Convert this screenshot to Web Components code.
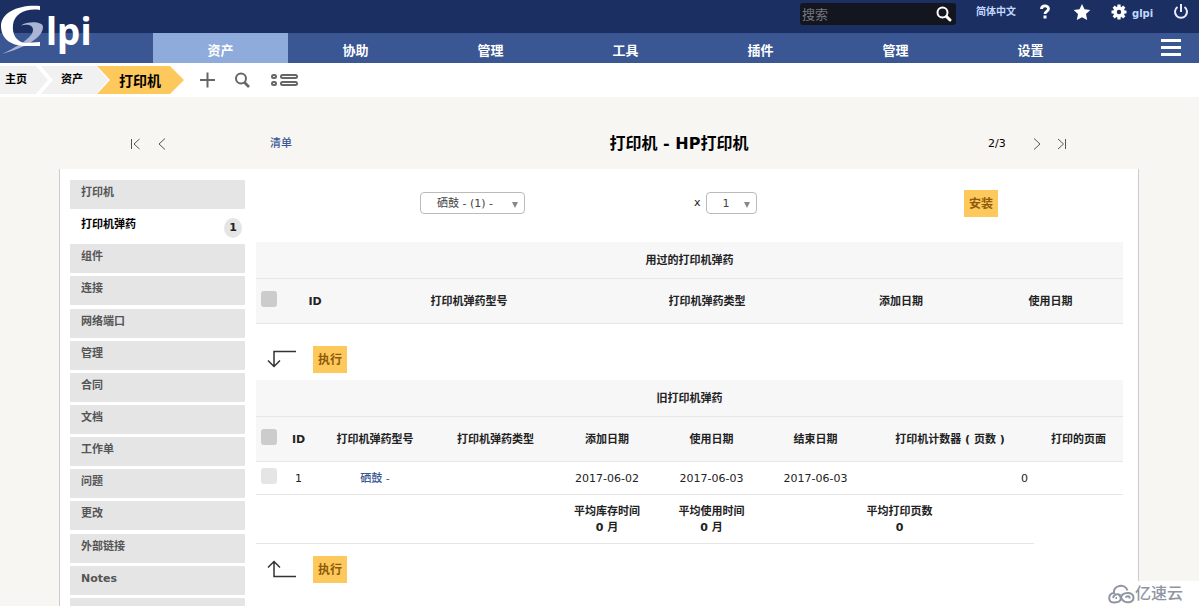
<!DOCTYPE html>
<html lang="zh-CN">
<head>
<meta charset="utf-8">
<title>GLPI - 打印机</title>
<style>
html,body{margin:0;height:100%}
body{font:11px/16px "DejaVu Sans","Noto Sans CJK SC",sans-serif;color:#222;background:#f7f6f3}
</style>
</head>
<body>
<glpi-app></glpi-app>
<script>
const define = (name, html, setup) => customElements.define(name, class extends HTMLElement {
  constructor() {
    super();
    const t = document.createElement('template');
    t.innerHTML = html;
    this.attachShadow({ mode: 'open' }).append(t.content.cloneNode(true));
  }
  connectedCallback() {
    if (setup) setup(this);
  }
});

define('glpi-logo', `
<style>:host{display:block;width:96px;height:60px} a,svg{display:block}
text{font:700 37px "Noto Sans",sans-serif;fill:#fff}</style>
<a href="#" aria-label="GLPI"><svg width="96" height="60" viewBox="0 0 96 60">
<path fill="#a9b5d3" d="M21 25.500C27 21 43 21 43 27C43 38 24 48 2 54C19 46 33 37 33 30C33 25 28 24 21 25.500Z"/>
<path fill="#fff" d="M40 6V10C26 8 14 14 13 25C12 34 16 41 24 43L40 42V46L26 46C9 46 1 37 1 26C1 12 20 4 40 6Z"/>
<text x="46" y="45">lpi</text></svg></a>`);

define('glpi-topbar', `
<style>
:host{display:flex;justify-content:flex-end;align-items:flex-start;height:33px;background:#1b2f62;padding-right:10px;box-sizing:border-box;color:#c3d8ff}
form{display:flex;align-items:center;width:156px;height:22px;margin:3px 20px 0 0;background:#13151f;border-radius:3px}
input{flex:1;min-width:0;background:none;border:0;outline:0;padding:2px 2px 0;color:#ccc;font:13px/20px "DejaVu Sans","Noto Sans CJK SC",sans-serif}
input::placeholder{color:#74777f}
button{background:none;border:0;padding:0;margin-right:4px;display:flex}
a{color:inherit;text-decoration:none;display:flex;align-items:center;height:24px;font-weight:700;font-size:10px}
svg{display:block}
.lang{width:60px}.help{width:37px}.star{width:38px}.user{width:62px;gap:5px}
.user span{padding-top:3px}
</style>
<form><input aria-label="搜索" placeholder="搜索"><button type="button" aria-label="搜索"><svg width="16" height="16" viewBox="0 0 16 16" fill="none" stroke="#fff" stroke-width="2"><circle cx="6.500" cy="6.500" r="5"/><path stroke-width="3" stroke-linecap="round" d="M10.500 10.500L14 14"/></svg></button></form>
<a class="lang" href="#">简体中文</a>
<a class="help" href="#" aria-label="帮助"><svg width="18" height="16" viewBox="0 0 18 16"><path d="M5.500 5C5.500 1 12.500 1 12.500 4.800C12.500 7.500 9 7.300 9 10" fill="none" stroke="#fff" stroke-width="2.800"/><rect x="7.500" y="11.500" width="3" height="3" fill="#fff"/></svg></a>
<a class="star" href="#" aria-label="收藏"><svg width="18" height="18" viewBox="0 0 18 18"><path fill="#fff" d="M9 1L11.500 6.300L17.300 7L13 11L14.200 17L9 14.200L3.800 17L5 11L.7 7L6.500 6.300Z"/></svg></a>
<a class="user" href="#"><svg width="16" height="16" viewBox="0 0 16 16"><circle cx="8" cy="8" r="4" fill="none" stroke="#fff" stroke-width="3.600"/><g stroke="#fff" stroke-width="3.200"><path d="M8 .5V3M8 13V15.500M.5 8H3M13 8H15.500M2.700 2.700L4.500 4.500M11.500 11.500L13.300 13.300M13.300 2.700L11.500 4.500M4.500 11.500L2.700 13.300"/></g></svg><span>glpi</span></a>
<a href="#" aria-label="退出"><svg width="16" height="16" viewBox="0 0 16 16" fill="none" stroke="#e7eefc" stroke-width="2"><path d="M8 0V8M4.500 3A6 6 0 1 0 11.500 3"/></svg></a>`);

define('glpi-menu', `
<style>
:host{display:flex;height:30px;background:#3a5693;box-sizing:border-box;padding-left:153px}
nav{flex:1;display:grid;grid-template-columns:repeat(7,1fr)}
nav a{display:flex;align-items:center;justify-content:center;padding-top:6px;color:#fff;font-weight:700;font-size:13px;text-decoration:none}
nav a.on{background:#8fabdb}
.more{width:101px;display:flex;justify-content:flex-end;padding:5px 18px 0 0;box-sizing:border-box;background:none;border:0}
</style>
<nav><a class="on" href="#">资产</a><a href="#">协助</a><a href="#">管理</a><a href="#">工具</a><a href="#">插件</a><a href="#">管理</a><a href="#">设置</a></nav>
<button class="more" aria-label="菜单"><svg width="20" height="18" viewBox="0 0 20 18" fill="#fff"><path d="M0 1h20v3H0zM0 8h20v3H0zM0 15h20v3H0z"/></svg></button>`);

define('glpi-crumbs', `
<style>
:host{display:flex;align-items:center;height:34px;background:#fff;color:#000}
a{display:flex;align-items:center;height:28px;box-sizing:border-box;color:#000;text-decoration:none;font-weight:700;background:#f1f1f1}
.c1{width:48px;padding-left:5px;clip-path:polygon(0 0,36px 0,100% 50%,36px 100%,0 100%)}
.c2{width:67px;margin-left:-7px;padding-left:20px;clip-path:polygon(0 0,55px 0,100% 50%,55px 100%,0 100%,12px 50%)}
.c3{width:87px;margin-left:-11px;padding:2px 0 0 22px;background:#fec95c;font-size:14px;clip-path:polygon(0 0,73px 0,100% 50%,73px 100%,0 100%,13px 50%)}
button{background:none;border:0;padding:0;display:flex}
.add{margin-left:15px}.find{margin-left:18px}.all{margin-left:20px}
</style>
<a class="c1" href="#">主页</a><a class="c2" href="#">资产</a><a class="c3" href="#">打印机</a>
<button class="add" aria-label="添加"><svg width="17" height="16" viewBox="0 0 17 16" stroke="#666" stroke-width="2"><path d="M8.500 0.500V15.500M1 8H16"/></svg></button>
<button class="find" aria-label="搜索"><svg width="17" height="16" viewBox="0 0 17 16" fill="none" stroke="#666" stroke-width="2"><circle cx="7" cy="6.500" r="5"/><path stroke-width="2.600" d="M10.500 10.500L15 15"/></svg></button>
<button class="all" aria-label="显示全部"><svg width="27" height="14" viewBox="0 0 27 14" fill="none" stroke="#666" stroke-width="2"><rect x="1" y="2" width="4" height="3" rx="1.500"/><rect x="10" y="2" width="16" height="3" rx="1.500"/><rect x="1" y="9" width="4" height="3" rx="1.500"/><rect x="10" y="9" width="16" height="3" rx="1.500"/></svg></button>`);

define('record-pager', `
<style>
:host{display:grid;grid-template-columns:380px 1fr 221px;align-items:center;height:72px;padding:20px 60px 0;box-sizing:border-box;color:#000}
div{display:flex;align-items:center;padding-top:2px}
a{color:#3a5693;text-decoration:none}
a svg{display:block;fill:none;stroke:#555;stroke-width:1}
h1{margin:0;padding-top:2px;text-align:center;font-size:16px;line-height:24px}
.l{padding-left:70px}.prev{margin-left:15px}.list{margin-left:101px;font-weight:500}
.r{padding-left:70px}.next{margin-left:25px}.last{margin-left:13px}
</style>
<div class="l"><a href="#" aria-label="首条"><svg width="12" height="12" viewBox="0 0 12 12"><path d="M1.500 1V11M9.500 1L4 6L9.500 11"/></svg></a>
<a class="prev" href="#" aria-label="上一条"><svg width="12" height="12" viewBox="0 0 12 12"><path d="M8 .5L2 6L8 11.500"/></svg></a>
<a class="list" href="#">清单</a></div>
<h1>打印机 - HP打印机</h1>
<div class="r"><span>2/3</span><a class="next" href="#" aria-label="下一条"><svg width="12" height="12" viewBox="0 0 12 12"><path d="M3 .5L9 6L3 11.500"/></svg></a>
<a class="last" href="#" aria-label="末条"><svg width="12" height="12" viewBox="0 0 12 12"><path d="M2 1L7.500 6L2 11M9.500 1V11"/></svg></a></div>`);

define('side-tabs', `
<style>:host{display:flex;flex-direction:column;justify-content:space-between;width:175px;height:447px;flex:none}</style><slot></slot>`);

define('side-tab', `
<style>
:host{display:block;height:29px}
a{display:flex;align-items:center;justify-content:space-between;height:29px;box-sizing:border-box;padding:0 3px 3px 11px;background:#e5e5e5;border-radius:1px;color:#555;font-weight:700;text-decoration:none}
:host([active]) a{background:none;color:#000}
::slotted(b){display:flex;align-items:center;justify-content:center;width:18px;height:20px;border-radius:50%;background:#e5e5e5;color:#222;margin-top:6px}
</style><a href="#"><span><slot></slot></span><slot name="count"></slot></a>`);

define('drop-down', `
<style>
:host{display:inline-block;position:relative}
select{display:block;appearance:none;box-sizing:border-box;width:100%;height:22px;border:1px solid #bbb;border-radius:4px;background:#fff;color:#444;padding:2px 0 0 16px;font:11px/18px "DejaVu Sans","Noto Sans CJK SC",sans-serif}
:host::after{content:"";position:absolute;right:7px;top:10px;border:3px solid transparent;border-top:6px solid #888;border-bottom:0;pointer-events:none}
</style><select></select>`, host => {
  const select = host.shadowRoot.querySelector('select');
  select.setAttribute('aria-label', host.getAttribute('label'));
  select.replaceChildren(new Option(host.getAttribute('value')));
});

define('action-button', `
<style>:host{display:inline-block}
button{display:block;height:27px;padding:1px 5px 0;border:0;background:#fec95c;color:#8f5a0a;font:700 12px/26px "DejaVu Sans","Noto Sans CJK SC",sans-serif}</style>
<button type="button"><slot></slot></button>`);

define('mass-action', `
<style>
:host{display:flex;align-items:center;gap:16px;height:56px;padding:14px 0 0 11px;box-sizing:border-box}
:host([up]){height:46px;padding-top:4px}
svg{display:block;fill:none;stroke:#333;stroke-width:1.500}
:host([up]) svg{transform:scaleY(-1)}
</style>
<svg width="30" height="18" viewBox="0 0 30 18"><path d="M29 1.500H7V16.500M1 10.500L7 16.500L13 10.500"/></svg>
<action-button><slot></slot></action-button>`);

const tableCss = `
:host{display:block}
table{width:100%;table-layout:fixed;border-collapse:separate;border-spacing:0}
td,th{padding:2px 0 0;text-align:center;border-bottom:1px solid #e6e6e6;height:30px;color:#222}
thead th{background:#f7f7f8}
.title th{height:34px}.heads th{height:42px}
td.num{text-align:right;padding-right:6px}
td a{color:#3a5693;text-decoration:none;font-weight:500}
.sum td{height:46px;font-weight:700}.sum .none{border:0}
input{display:block;appearance:none;width:16px;height:16px;margin:0 0 6px 5px;border-radius:3px;background:#ccc}
td input{background:#e5e5e5}`;

define('used-cartridges', `<style>${tableCss}</style>
<table><colgroup><col style="width:26px"><col style="width:66px"><col style="width:242px"><col style="width:234px"><col style="width:154px"><col style="width:145px"></colgroup>
<thead><tr class="title"><th colspan="6">用过的打印机弹药</th></tr>
<tr class="heads"><th><input type="checkbox" aria-label="全选"></th><th>ID</th><th>打印机弹药型号</th><th>打印机弹药类型</th><th>添加日期</th><th>使用日期</th></tr></thead></table>`);

define('old-cartridges', `<style>${tableCss}</style>
<table><colgroup><col style="width:26px"><col style="width:33px"><col style="width:120px"><col style="width:121px"><col style="width:102px"><col style="width:107px"><col style="width:101px"><col style="width:168px"><col style="width:89px"></colgroup>
<thead><tr class="title"><th colspan="9">旧打印机弹药</th></tr>
<tr class="heads"><th><input type="checkbox" aria-label="全选"></th><th>ID</th><th>打印机弹药型号</th><th>打印机弹药类型</th><th>添加日期</th><th>使用日期</th><th>结束日期</th><th>打印机计数器 ( 页数 )</th><th>打印的页面</th></tr></thead>
<tbody><tr><td><input type="checkbox" aria-label="选择 1"></td><td>1</td><td><a href="#">硒鼓 -</a></td><td></td><td>2017-06-02</td><td>2017-06-03</td><td>2017-06-03</td><td class="num">0</td><td></td></tr>
<tr class="sum"><td colspan="4"></td><td>平均库存时间<br>0 月</td><td>平均使用时间<br>0 月</td><td colspan="2">平均打印页数<br>0</td><td class="none"></td></tr></tbody></table>`);

define('install-form', `
<style>
:host{display:block}
form{display:grid;grid-template-columns:433fr 150fr 284fr;align-items:center;height:62px;padding-bottom:16px;box-sizing:border-box}
div{text-align:center}.qty{display:flex;align-items:center;gap:5px;padding-left:5px}
.model{width:105px;vertical-align:middle}.count{width:51px}
</style>
<form><div><drop-down class="model" label="型号" value="硒鼓 - (1) -"></drop-down></div><div class="qty"><span>x</span><drop-down class="count" label="数量" value="1"></drop-down></div><div><action-button>安装</action-button></div></form>`);

define('site-mark', `
<style>:host{position:absolute;right:0;bottom:0;display:flex;align-items:center;width:100px;height:25px;padding-left:9px;box-sizing:border-box;background:#fff;color:#8f95a3;font-size:16px;font-weight:500;line-height:24px}</style>
<svg width="27" height="20" viewBox="0 0 27 20" fill="none" stroke="#8f95a3" stroke-width="2"><path d="M5 14C6 9 13 9 13 13.500C13 19 7 18.500 5.500 18.500C-.5 18 0 9.500 6 9C5 1 17-1 19.500 6.500M9 14H7.500M13 13.500C14 8 25.500 7 25.500 13.500C25.500 19 18 19.500 15 16.500L11 11M17.500 13.500C19 11.500 22 12 21.500 14.500"/></svg><span>亿速云</span>`);

define('glpi-app', `
<style>
:host{display:flex;flex-direction:column;height:100vh;overflow:hidden;position:relative}
glpi-logo{position:absolute;left:0;top:0}
main{flex:1;min-height:0;overflow:hidden;display:flex;gap:11px;margin:0 60px 0 59px;padding:11px 15px 0 10px;background:#fff;border:1px solid #ccc;border-width:0 1px}
section{flex:1;min-width:0}
</style>
<glpi-topbar></glpi-topbar><glpi-menu></glpi-menu><glpi-logo></glpi-logo><glpi-crumbs></glpi-crumbs>
<record-pager></record-pager>
<main><side-tabs>
<side-tab>打印机</side-tab><side-tab active>打印机弹药<b slot="count">1</b></side-tab><side-tab>组件</side-tab><side-tab>连接</side-tab><side-tab>网络端口</side-tab><side-tab>管理</side-tab><side-tab>合同</side-tab><side-tab>文档</side-tab><side-tab>工作单</side-tab><side-tab>问题</side-tab><side-tab>更改</side-tab><side-tab>外部链接</side-tab><side-tab>Notes</side-tab><side-tab></side-tab>
</side-tabs>
<section><install-form></install-form><used-cartridges></used-cartridges><mass-action>执行</mass-action><old-cartridges></old-cartridges><mass-action up>执行</mass-action></section></main>
<site-mark></site-mark>`);

</script>
</body>
</html>
